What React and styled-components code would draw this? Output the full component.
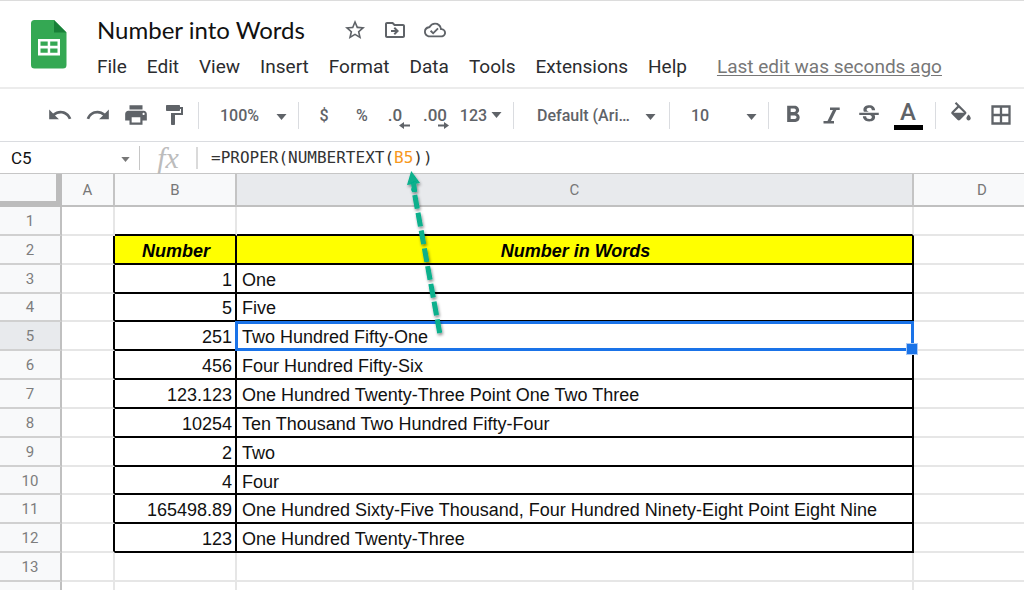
import React from "react";
import styled, { createGlobalStyle } from "styled-components";
import {
  MdStarBorder,
  MdOutlineDriveFileMove,
  MdOutlineCloudDone,
  MdUndo,
  MdRedo,
  MdPrint,
  MdFormatPaint,
  MdFormatBold,
  MdStrikethroughS,
} from "react-icons/md";

const MENUS = [
  "File",
  "Edit",
  "View",
  "Insert",
  "Format",
  "Data",
  "Tools",
  "Extensions",
  "Help",
];

const COLUMNS = [
  { name: "A", width: 53 },
  { name: "B", width: 122 },
  { name: "C", width: 677 },
  { name: "D", width: 138 },
];

const ROW_COUNT = 13;
const FIRST_DATA_ROW = 2;
const ACTIVE_ROW = 5;
const ACTIVE_COLUMN = "C";

const DATA = [
  ["Number", "Number in Words"],
  ["1", "One"],
  ["5", "Five"],
  ["251", "Two Hundred Fifty-One"],
  ["456", "Four Hundred Fifty-Six"],
  ["123.123", "One Hundred Twenty-Three Point One Two Three"],
  ["10254", "Ten Thousand Two Hundred Fifty-Four"],
  ["2", "Two"],
  ["4", "Four"],
  [
    "165498.89",
    "One Hundred Sixty-Five Thousand, Four Hundred Ninety-Eight Point Eight Nine",
  ],
  ["123", "One Hundred Twenty-Three"],
];

const GlobalStyle = createGlobalStyle`
  * {
    box-sizing: border-box;
  }

  body {
    margin: 0;
    overflow: hidden;
    background: #fff;
    font-family: Roboto, sans-serif;
  }

  button,
  input,
  select {
    margin: 0;
    padding: 0;
    border: 0;
    background: none;
    color: inherit;
    font: inherit;
  }
`;

const StyledHeader = styled.header`
  display: flex;
  height: 89px;
  border-top: 1px solid #dcdcdc;
  border-bottom: 2px solid #ececec;

  .logo {
    flex: none;
    margin: 18px 30px 0 30px;
  }
`;

const TitleRow = styled.div`
  display: flex;
  align-items: center;
  height: 32px;
  margin-top: 13px;
  color: #5f6368;

  h1 {
    margin: 0 30px 0 0;
    color: #111;
    font-family: Lato, sans-serif;
    font-size: 24px;
    font-weight: 400;
    line-height: 32px;
  }
`;

const TitleButton = styled.button`
  display: flex;
  align-items: center;
  justify-content: center;
  width: 40px;
  height: 28px;
`;

const MenuBar = styled.nav`
  display: flex;
  align-items: center;
  gap: 20px;
  height: 42px;
  color: #2b2c2f;
  font-size: 19px;
  line-height: 24px;

  a {
    margin-left: 10px;
    color: #777;
    text-underline-offset: 2px;
  }
`;

const StyledToolbar = styled.div`
  display: flex;
  align-items: center;
  height: 53px;
  padding-left: 41px;
  border-bottom: 1px solid #dadce0;
  color: #5f6368;
  font-size: 16px;
  font-weight: 500;
`;

const ToolGroup = styled.div`
  display: flex;
  align-items: center;
  flex: none;
  width: ${({ $width }) => $width}px;
  height: 27px;
  padding-left: ${({ $inset }) => $inset || 0}px;
  padding-right: ${({ $end }) => $end || 0}px;
  border-right: ${({ $last }) => ($last ? "0" : "1px solid #dadce0")};
`;

const ToolButton = styled.button`
  display: flex;
  align-items: center;
  justify-content: center;
  flex: none;
  width: ${({ $width }) => $width || 38}px;
  height: 27px;
`;

const DecimalLabel = styled.span`
  position: relative;
  font-size: 17px;

  svg {
    position: absolute;
    right: ${({ $overhang }) => -$overhang}px;
    bottom: -4px;
  }
`;

const MenuLabel = styled.span`
  display: flex;
  align-items: center;
  gap: 4px;
`;

const ColorLetter = styled.span`
  width: 29px;
  border-bottom: 5px solid #000;
  color: #5f6368;
  font-size: 24px;
  line-height: 25px;
`;

const SelectBox = styled.label`
  position: relative;
  flex: 1;

  select {
    width: 100%;
    padding-left: 21px;
    appearance: none;
    outline: none;
  }

  svg {
    position: absolute;
    top: 8px;
    right: 11px;
    pointer-events: none;
  }
`;

const StyledFormulaBar = styled.div`
  display: flex;
  align-items: center;
  height: 32px;
  border-bottom: 1px solid #c6c6c6;

  .fx {
    width: 58px;
    border-right: 2px solid #dadada;
    color: #bcbcbc;
    font-family: "Liberation Serif", serif;
    font-size: 30px;
    font-style: italic;
    line-height: 22px;
    text-align: center;
  }
`;

const NameBox = styled.label`
  position: relative;
  width: 140px;
  border-right: 1px solid #c6c6c6;

  input {
    width: 110px;
    height: 24px;
    padding-left: 11px;
    color: #111;
    font-size: 17px;
    outline: none;
  }

  svg {
    position: absolute;
    top: 11px;
    right: 9px;
    color: #777;
  }
`;

const Formula = styled.div`
  flex: 1;
  padding-left: 13px;
  color: #333;
  font-family: "DejaVu Sans Mono", monospace;
  font-size: 16px;
  line-height: 24px;
  outline: none;

  span {
    color: #f7981d;
  }
`;

const StyledSheet = styled.main`
  position: relative;

  .annotation {
    position: absolute;
    top: -10px;
    left: 396px;
    z-index: 2;
    pointer-events: none;
  }
`;

const Grid = styled.table`
  width: 1052px;
  height: 437px;
  table-layout: fixed;
  border-spacing: 0;
`;

const HeaderCell = styled.th`
  height: 33px;
  padding: 0;
  border-right: 2px solid #c4c4c4;
  border-bottom: 2px solid #c0c0c0;
  background: ${({ $active }) => ($active ? "#e8eaed" : "#f8f9fa")};
  color: #777;
  font-size: 15px;
  font-weight: 400;
`;

const CornerCell = styled.td`
  padding: 0;
  border-right: 6px solid #bcbcbc;
  border-bottom: 6px solid #bcbcbc;
  background: #f8f9fa;
`;

const RowHeader = styled.th`
  padding: 2px 0 0;
  border-right: 2px solid #c0c0c0;
  border-bottom: 2px solid #d0d0d0;
  background: ${({ $active }) => ($active ? "#e8eaed" : "#f8f9fa")};
  color: #7d7d7d;
  font-size: 15px;
  font-weight: 400;
  line-height: 21px;
`;

const Cell = styled.td`
  position: relative;
  padding: 3px 3px 0 5px;
  border-right: 2px solid ${({ $right }) => ($right ? "#000" : "#e6e6e6")};
  border-bottom: 2px solid ${({ $bottom }) => ($bottom ? "#000" : "#e6e6e6")};
  background: ${({ $title }) => ($title ? "#ff0" : "#fff")};
  color: ${({ $title }) => ($title ? "#000" : "#111")};
  font-family: "Liberation Sans", sans-serif;
  font-size: 18px;
  font-style: ${({ $title }) => ($title ? "italic" : "normal")};
  font-weight: ${({ $title }) => ($title ? 700 : 400)};
  line-height: 20px;
  text-align: ${({ $align }) => $align};
  white-space: nowrap;
`;

const Selection = styled.div`
  position: absolute;
  inset: -1px -2px -2px;
  z-index: 1;
  border: 3px solid #1a73e8;

  &::after {
    content: "";
    position: absolute;
    right: -7px;
    bottom: -7px;
    width: 10px;
    height: 10px;
    border: 1px solid #a9c9f6;
    background: #1a73e8;
  }
`;

function Caret({ small }) {
  return (
    <svg width={small ? 9 : 11} height={small ? 5 : 6} viewBox="0 0 10 6">
      <path d="M0 0h10L5 6z" fill="currentColor" />
    </svg>
  );
}

function SheetsLogo() {
  return (
    <svg className="logo" width="37" height="51" viewBox="0 0 37 51">
      <path
        d="M4.500 1H24l12.500 12.500V46a3.500 3.500 0 0 1-3.500 3.500H4.500A3.500 3.500 0 0 1 1 46V4.500A3.500 3.500 0 0 1 4.500 1z"
        fill="#34a853"
      />
      <path d="M24 1l12.500 12.500H24z" fill="#188038" />
      <path
        d="M8 20v16.500h22V20zm2.500 2.500h7.200v4.300h-7.200zm9.700 0h7.300v4.300h-7.300zm-9.700 7h7.200v4.300h-7.200zm9.700 0h7.300v4.300h-7.300z"
        fill="#fff"
        fillRule="evenodd"
      />
    </svg>
  );
}

function DecimalArrow({ right }) {
  return (
    <svg width="11" height="7" viewBox="0 0 11 7">
      <path
        d={
          right
            ? "M0 2.500h6V0l5 3.500L6 7V4.500H0z"
            : "M11 2.500H5V0L0 3.500 5 7V4.500h6z"
        }
        fill="currentColor"
      />
    </svg>
  );
}

function ItalicIcon() {
  return (
    <svg width="17" height="17" viewBox="0 0 17 17">
      <path
        d="M7 .500h9.700v2.500h-3.300L8 14h3v2.500H.500V14h4L9.900 3H7z"
        fill="currentColor"
      />
    </svg>
  );
}

function FillIcon() {
  return (
    <svg width="20" height="26" viewBox="3 0 18 24">
      <path
        d="M16.560 8.940L7.620 0 6.210 1.410l2.380 2.380-5.150 5.150c-.590.590-.590 1.540 0 2.120l5.500 5.500c.290.290.680.440 1.060.440s.770-.150 1.060-.440l5.500-5.500c.590-.580.590-1.530 0-2.120zM5.210 10L10 5.210 14.790 10H5.210zM19 11.500s-2 2.170-2 3.500c0 1.100.900 2 2 2s2-.900 2-2c0-1.330-2-3.500-2-3.500z"
        fill="currentColor"
      />
    </svg>
  );
}

function BordersIcon() {
  return (
    <svg width="20" height="20" viewBox="0 0 20 20">
      <path
        d="M1.500 1.500h17v17h-17zM10 1.500v17M1.500 10h17"
        fill="none"
        stroke="currentColor"
        strokeWidth="2.300"
      />
    </svg>
  );
}

function ToolSelect({ label, value }) {
  return (
    <SelectBox>
      <select aria-label={label} defaultValue={value}>
        <option>{value}</option>
      </select>
      <Caret />
    </SelectBox>
  );
}

function Header() {
  return (
    <StyledHeader>
      <SheetsLogo />
      <div>
        <TitleRow>
          <h1>Number into Words</h1>
          <TitleButton aria-label="Star">
            <MdStarBorder size={24} />
          </TitleButton>
          <TitleButton aria-label="Move">
            <MdOutlineDriveFileMove size={24} />
          </TitleButton>
          <TitleButton aria-label="Document status">
            <MdOutlineCloudDone size={22} />
          </TitleButton>
        </TitleRow>
        <MenuBar>
          {MENUS.map((menu) => (
            <button key={menu}>{menu}</button>
          ))}
          <a href="#history">Last edit was seconds ago</a>
        </MenuBar>
      </div>
    </StyledHeader>
  );
}

function Toolbar() {
  return (
    <StyledToolbar role="toolbar">
      <ToolGroup $width={158}>
        <ToolButton aria-label="Undo">
          <MdUndo size={26} />
        </ToolButton>
        <ToolButton aria-label="Redo">
          <MdRedo size={26} />
        </ToolButton>
        <ToolButton aria-label="Print">
          <MdPrint size={26} />
        </ToolButton>
        <ToolButton aria-label="Paint format">
          <MdFormatPaint size={24} />
        </ToolButton>
      </ToolGroup>
      <ToolGroup $width={100}>
        <ToolSelect label="Zoom" value="100%" />
      </ToolGroup>
      <ToolGroup $width={215} $inset={6}>
        <ToolButton>$</ToolButton>
        <ToolButton>%</ToolButton>
        <ToolButton $width={28}>
          <DecimalLabel $overhang={8}>
            .0
            <DecimalArrow />
          </DecimalLabel>
        </ToolButton>
        <ToolButton $width={52}>
          <DecimalLabel $overhang={2}>
            .00
            <DecimalArrow right />
          </DecimalLabel>
        </ToolButton>
        <ToolButton $width={40}>
          <MenuLabel>
            123
            <Caret />
          </MenuLabel>
        </ToolButton>
      </ToolGroup>
      <ToolGroup $width={156} $inset={2} $end={2}>
        <ToolSelect label="Font" value="Default (Ari…" />
      </ToolGroup>
      <ToolGroup $width={99}>
        <ToolSelect label="Font size" value="10" />
      </ToolGroup>
      <ToolGroup $width={167} $inset={5}>
        <ToolButton aria-label="Bold">
          <MdFormatBold size={28} />
        </ToolButton>
        <ToolButton aria-label="Italic">
          <ItalicIcon />
        </ToolButton>
        <ToolButton aria-label="Strikethrough">
          <MdStrikethroughS size={26} />
        </ToolButton>
        <ToolButton $width={40} aria-label="Text color">
          <ColorLetter>A</ColorLetter>
        </ToolButton>
      </ToolGroup>
      <ToolGroup $width={88} $inset={5} $last>
        <ToolButton $width={40} aria-label="Fill color">
          <FillIcon />
        </ToolButton>
        <ToolButton $width={40} aria-label="Borders">
          <BordersIcon />
        </ToolButton>
      </ToolGroup>
    </StyledToolbar>
  );
}

function FormulaBar() {
  return (
    <StyledFormulaBar>
      <NameBox>
        <input aria-label="Name box" defaultValue="C5" />
        <Caret small />
      </NameBox>
      <div className="fx">fx</div>
      <Formula
        role="textbox"
        aria-label="Formula"
        contentEditable
        suppressContentEditableWarning
        spellCheck={false}
      >
        =PROPER(NUMBERTEXT(<span>B5</span>))
      </Formula>
    </StyledFormulaBar>
  );
}

function Annotation() {
  return (
    <svg className="annotation" width="64" height="184" viewBox="0 0 64 184">
      <defs>
        <filter id="shadow" x="-50%" y="-10%" width="200%" height="120%">
          <feDropShadow dx="1" dy="2" stdDeviation="1.500" floodOpacity="0.450" />
        </filter>
      </defs>
      <g filter="url(#shadow)">
        <path
          d="M43.700 169L17.500 24"
          stroke="#07b08c"
          strokeWidth="5"
          strokeDasharray="13.800 4.260"
        />
        <path d="M15.200 7L24 19 11 21z" fill="#07b08c" />
        <path d="M17.500 18l1.200 10" stroke="#07b08c" strokeWidth="5" />
      </g>
    </svg>
  );
}

function Row({ number }) {
  const data = DATA[number - FIRST_DATA_ROW];
  const lastDataRow = FIRST_DATA_ROW + DATA.length - 1;
  const isTitle = number === FIRST_DATA_ROW;
  // the line under a row also draws the top edge of the row below it
  const bottom = number >= FIRST_DATA_ROW - 1 && number <= lastDataRow;

  return (
    <tr>
      <RowHeader scope="row" $active={number === ACTIVE_ROW}>
        {number <= ROW_COUNT ? number : "\u00a0"}
      </RowHeader>
      <Cell $right={Boolean(data)} />
      <Cell
        $right={Boolean(data)}
        $bottom={bottom}
        $title={isTitle}
        $align={isTitle ? "center" : "right"}
      >
        {data && data[0]}
      </Cell>
      <Cell
        $right={Boolean(data)}
        $bottom={bottom}
        $title={isTitle}
        $align={isTitle ? "center" : "left"}
      >
        {data && data[1]}
        {number === ACTIVE_ROW && <Selection />}
      </Cell>
      <Cell />
    </tr>
  );
}

function Sheet() {
  // one spare row closes the grid below the numbered ones
  const rows = Array.from({ length: ROW_COUNT + 1 }, (_, index) => index + 1);

  return (
    <StyledSheet>
      <Grid>
        <colgroup>
          <col width={62} />
          {COLUMNS.map((column) => (
            <col key={column.name} width={column.width} />
          ))}
        </colgroup>
        <thead>
          <tr>
            <CornerCell />
            {COLUMNS.map(({ name }) => (
              <HeaderCell
                key={name}
                scope="col"
                $active={name === ACTIVE_COLUMN}
              >
                {name}
              </HeaderCell>
            ))}
          </tr>
        </thead>
        <tbody>
          {rows.map((number) => (
            <Row key={number} number={number} />
          ))}
        </tbody>
      </Grid>
      <Annotation />
    </StyledSheet>
  );
}

function App() {
  return (
    <>
      <GlobalStyle />
      <Header />
      <Toolbar />
      <FormulaBar />
      <Sheet />
    </>
  );
}

export default App;
